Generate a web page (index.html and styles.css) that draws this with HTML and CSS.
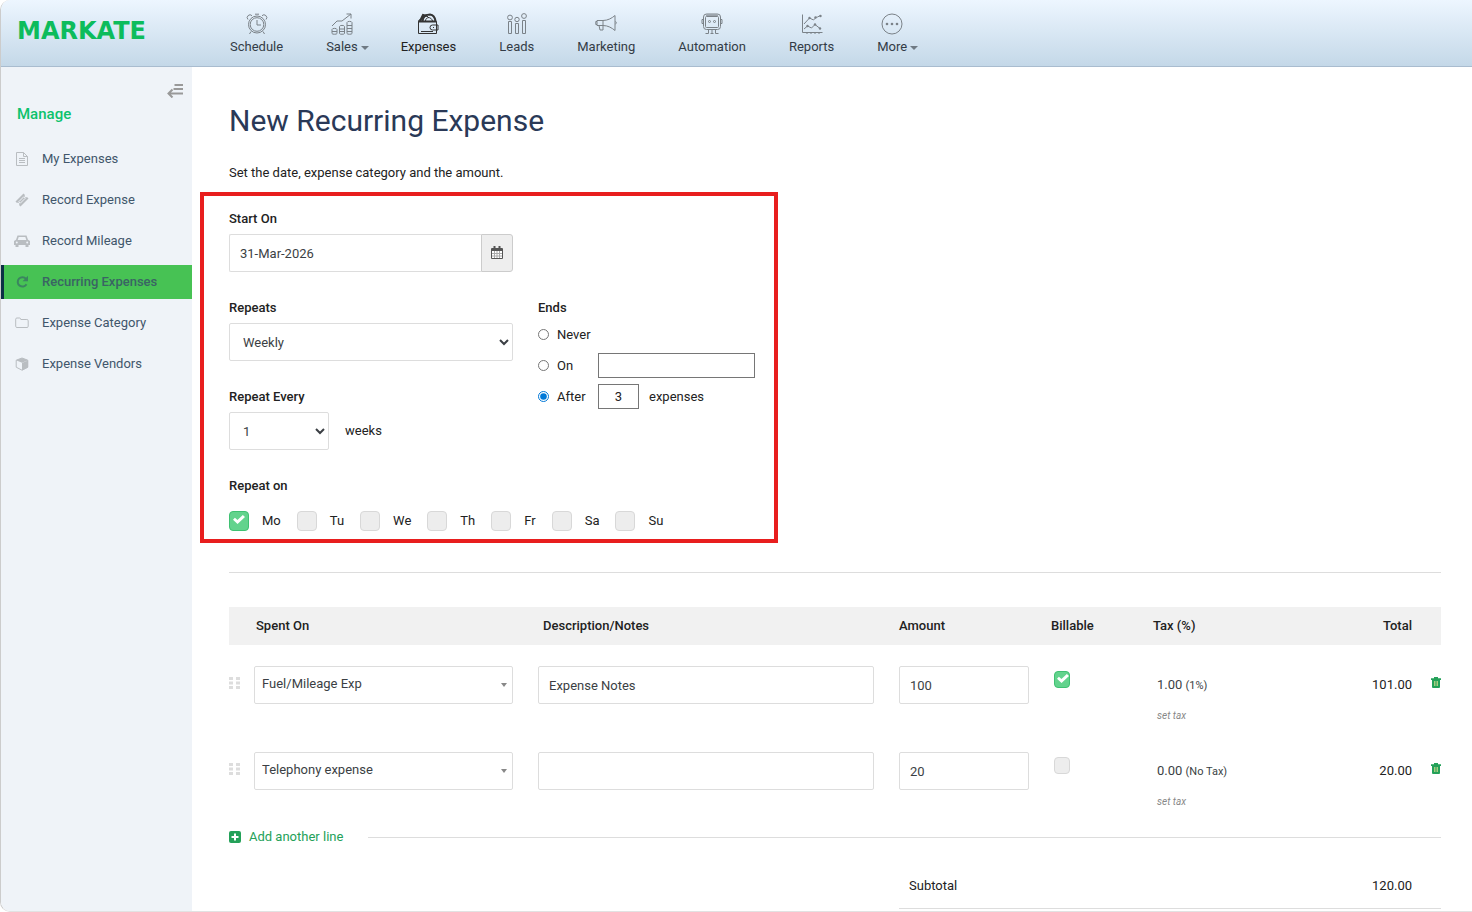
FILE: index.html
```
<!DOCTYPE html>
<html lang="en">
<head>
  <meta charset="UTF-8" />
  <meta name="viewport" content="width=device-width, initial-scale=1.0"/>
  <title>New Recurring Expense - Markate</title>
  <link rel="stylesheet" href="styles.css">
</head>
<body>
<div class="app">

  <header class="topbar">
    <a href="#" class="logo">MARKATE</a>
    <nav class="main-nav">
      <a href="#">
        <svg width="22" height="22" viewBox="0 0 22 22"><circle cx="11" cy="11.5" r="8.5"/><circle cx="11" cy="11.5" r="6.8"/><path d="M11 7v5h4M5 18.5l-1.5 2.500M17 18.500l1.500 2.500M9 1.200h4M2 6.500a2.600 2.600 0 1 1 4-3.800M20 6.500a2.600 2.600 0 1 0-4-3.800"/></svg>
        <span>Schedule</span>
      </a>
      <a href="#" class="has-menu">
        <svg width="22" height="22" viewBox="0 0 22 22"><path d="M1 13l5-5h5l9-7M15.500 1H20v4.500M1 16.500c0-1.500 5-1.500 5 0v4c0 1-5 1-5 0zM1 18.500h5M8.500 13.500c0-1.500 5-1.500 5 0v7c0 1-5 1-5 0zM8.500 16h5M8.500 18.500h5M16 9.500c0-1.500 5-1.500 5 0v11c0 1-5 1-5 0zM16 12.500h5M16 15.500h5M16 18.500h5"/></svg>
        <span>Sales</span>
      </a>
      <a href="#" class="active">
        <svg width="22" height="22" viewBox="0 0 22 22"><path class="bold" d="M1.500 8.500h18M3 8l3-6 4 1M5.500 8C6 3 10 1.500 13 1.500c3 .5 5 3 5.500 6.500"/><path d="M1.500 8.500h18v12h-18zM1.500 8.500c0-2 2-2 3-2M8.500 8c0-4 5.500-5 7 0M9 2l3 3M19.500 12h-4a2.500 2.500 0 0 0 0 5h4M19.500 12h1.500v5h-1.500M16 14.500h1M4 18.500h12"/></svg>
        <span>Expenses</span>
      </a>
      <a href="#">
        <svg width="22" height="22" viewBox="0 0 22 22"><circle cx="4" cy="4.500" r="2.400"/><circle cx="11" cy="6.500" r="2.200"/><circle cx="18" cy="3" r="2.400"/><path d="M2.500 8.500h3v12h-3zM9.500 10.500h3v10h-3zM16.500 7.500h3v13h-3z"/></svg>
        <span>Leads</span>
      </a>
      <a href="#">
        <svg width="22" height="22" viewBox="0 0 22 22"><path d="M2 7.500h6v5H2zM2 8.500H.8v3H2M8 7.500c5 0 9-2.500 12-5v15c-3-2.500-7-5-12-5M4 12.500l1 4.500h3v-4.500M20.500 8.500c1 0 1 2.500 0 2.500"/></svg>
        <span>Marketing</span>
      </a>
      <a href="#">
        <svg width="22" height="22" viewBox="0 0 22 22"><rect x="2.500" y="1" width="17" height="15.500" rx="3"/><rect x="4.500" y="3.500" width="13" height="11" rx="1"/><circle cx="8.500" cy="8.500" r="1"/><circle cx="13.500" cy="8.500" r="1"/><path d="M5 2.200h12M2.500 6.500H1v4h1.500M19.500 6.500H21v4h-1.500M7.500 16.500v4H4.500M14.500 16.500v4h3M11 16.500v4M9.500 20.500h3"/></svg>
        <span>Automation</span>
      </a>
      <a href="#">
        <svg width="22" height="22" viewBox="0 0 22 22"><path d="M1.500 1.500v18h20M6 19.500v1.500M10 19.500v1.500M14 19.500v1.500M18 19.500v1.500M3 11l5.500-6 4 2 3-3h1l3-1.500M3 16l3.500-3 4 2 3.500-3.500 5 4"/><g class="dots"><circle cx="8.500" cy="5" r="1.200"/><circle cx="14.500" cy="4.500" r="1.200"/><circle cx="19.500" cy="3" r="1.200"/><circle cx="6.500" cy="13" r="1.200"/><circle cx="14" cy="11.500" r="1.200"/><circle cx="19" cy="15.500" r="1.200"/></g></svg>
        <span>Reports</span>
      </a>
      <a href="#" class="has-menu">
        <svg width="22" height="22" viewBox="0 0 22 22"><circle cx="11" cy="11" r="10"/><g class="dots"><circle cx="6" cy="11" r="1.300"/><circle cx="11" cy="11" r="1.300"/><circle cx="16" cy="11" r="1.300"/></g></svg>
        <span>More</span>
      </a>
    </nav>
  </header>

  <div class="layout">
    <aside class="sidebar">
      <button type="button" class="collapse" aria-label="Collapse menu">
        <svg width="16" height="14" viewBox="0 0 16 14"><path d="M7.500 1H16M6.500 5H16M2 9.500h14M5.500 5.500l-4 4 4 4"/></svg>
      </button>
      <h2>Manage</h2>
      <ul>
        <li><a href="#">
          <svg width="14" height="14" viewBox="0 0 14 14"><path class="line" d="M1.500.5h7l4 4v9h-11zM8.500.5v4h4M4 6.500h6M4 8.500h6M4 10.500h6"/></svg>
          My Expenses</a></li>
        <li><a href="#">
          <svg width="14" height="14" viewBox="0 0 14 14"><path d="M8.500.5L10 2a1.400 1.400 0 0 0 2 2l1.500 1.500-8 8L4 12a1.400 1.400 0 0 0-2-2L.5 8.500z"/><path class="cut" d="M3.800 8.700L8.700 3.800l1.500 1.500-4.900 4.900z"/></svg>
          Record Expense</a></li>
        <li><a href="#">
          <svg width="16" height="14" viewBox="0 0 16 14"><path d="M3.500 1.500h9l1.500 4.300 2 1.200v4h-1.500V13h-3v-2h-7v2h-3v-2H0V7l2-1.200zM4.700 3l-1 3h8.600l-1-3zM2.800 7.500a1 1 0 1 0 0 2 1 1 0 0 0 0-2zM13.200 7.500a1 1 0 1 0 0 2 1 1 0 0 0 0-2z" fill-rule="evenodd"/></svg>
          Record Mileage</a></li>
        <li><a href="#" class="active">
          <svg width="14" height="14" viewBox="0 0 14 14"><path class="thick" d="M11 3.800A4.700 4.700 0 1 0 11.500 9.200"/><path d="M13 .8v5.400H7.600z"/></svg>
          Recurring Expenses</a></li>
        <li><a href="#">
          <svg width="14" height="14" viewBox="0 0 14 14"><path class="line" d="M.7 3.200q0-1.200 1.200-1.200h2.700q1 0 1.200 1.500h6q1.400 0 1.400 1.200v5.600q0 1.200-1.200 1.200H1.900q-1.200 0-1.200-1.200z"/></svg>
          Expense Category</a></li>
        <li><a href="#">
          <svg width="14" height="14" viewBox="0 0 14 14"><path class="line" d="M7 1l5.800 2.200v7L7 13.200l-5.800-3v-7z"/><path d="M7 6l6-2.500v7L7 13.500zM1 3.300L7 1l6 2.300-6 2.400z"/></svg>
          Expense Vendors</a></li>
      </ul>
    </aside>

    <main>
      <h1>New Recurring Expense</h1>
      <p class="intro">Set the date, expense category and the amount.</p>

      <form>
        <section class="schedule">
          <div class="field">
            <label for="start">Start On</label>
            <div class="date-group">
              <input type="text" id="start" value="31-Mar-2026">
              <button type="button" aria-label="Pick a date">
                <svg width="12" height="13" viewBox="0 0 12 13"><path class="page" d="M.5 2.500h11v10H.5z"/><path class="cells" d="M1 7.500h10M1 10h10M3.500 5v7M6 5v7M8.500 5v7"/><path class="rings" d="M.5 4h11M3.500 0v3M8.500 0v3"/></svg>
              </button>
            </div>
          </div>

          <div class="columns">
            <div>
              <div class="field">
                <label for="repeats">Repeats</label>
                <select id="repeats">
                  <option>Daily</option>
                  <option selected>Weekly</option>
                  <option>Monthly</option>
                </select>
              </div>
              <div class="field">
                <label for="every">Repeat Every</label>
                <div class="every">
                  <select id="every"><option>1</option><option>2</option><option>3</option></select>
                  <span>weeks</span>
                </div>
              </div>
            </div>

            <fieldset class="ends">
              <legend>Ends</legend>
              <div class="end-row">
                <input type="radio" name="ends" id="never">
                <label for="never">Never</label>
              </div>
              <div class="end-row">
                <input type="radio" name="ends" id="on">
                <label for="on">On</label>
                <input type="text" class="end-date" aria-label="End date">
              </div>
              <div class="end-row">
                <input type="radio" name="ends" id="after" checked>
                <label for="after">After</label>
                <input type="text" class="end-count" value="3" aria-label="Number of expenses">
                <span>expenses</span>
              </div>
            </fieldset>
          </div>

          <fieldset class="repeat-on">
            <legend>Repeat on</legend>
            <div class="days">
              <label><input type="checkbox" class="check" checked>Mo</label>
              <label><input type="checkbox" class="check">Tu</label>
              <label><input type="checkbox" class="check">We</label>
              <label><input type="checkbox" class="check">Th</label>
              <label><input type="checkbox" class="check">Fr</label>
              <label><input type="checkbox" class="check">Sa</label>
              <label><input type="checkbox" class="check">Su</label>
            </div>
          </fieldset>
        </section>

        <hr>

        <table class="lines">
          <thead>
            <tr>
              <th class="c-grip"></th>
              <th class="c-spent">Spent On</th>
              <th class="c-notes">Description/Notes</th>
              <th class="c-amount">Amount</th>
              <th class="c-bill">Billable</th>
              <th class="c-tax">Tax (%)</th>
              <th class="c-total">Total</th>
              <th class="c-del"></th>
            </tr>
          </thead>
          <tbody>
            <tr>
              <td><svg class="grip" width="11" height="12" viewBox="0 0 11 12"><path d="M0 0h4v3H0zM7 0h4v3H7zM0 4.500h4v3H0zM7 4.500h4v3H7zM0 9h4v3H0zM7 9h4v3H7z"/></svg></td>
              <td><div class="picker"><select aria-label="Spent on"><option>Fuel/Mileage Exp</option></select></div></td>
              <td><input type="text" class="notes" value="Expense Notes" aria-label="Notes"></td>
              <td><input type="text" class="amount" value="100" aria-label="Amount"></td>
              <td><input type="checkbox" class="check small" checked aria-label="Billable"></td>
              <td class="tax">1.00 <small>(1%)</small><a href="#">set tax</a></td>
              <td class="total">101.00</td>
              <td class="del"><button type="button" aria-label="Delete line"><svg width="10" height="11" viewBox="0 0 10 11"><path d="M0 1.200h3V0h4v1.200h3V3H0z"/><path d="M1 2h8v8q0 1-1 1H2q-1 0-1-1z"/><path class="slots" d="M3.500 4v5M5 4v5M6.500 4v5"/></svg></button></td>
            </tr>
            <tr>
              <td><svg class="grip" width="11" height="12" viewBox="0 0 11 12"><path d="M0 0h4v3H0zM7 0h4v3H7zM0 4.500h4v3H0zM7 4.500h4v3H7zM0 9h4v3H0zM7 9h4v3H7z"/></svg></td>
              <td><div class="picker"><select aria-label="Spent on"><option>Telephony expense</option></select></div></td>
              <td><input type="text" class="notes" aria-label="Notes"></td>
              <td><input type="text" class="amount" value="20" aria-label="Amount"></td>
              <td><input type="checkbox" class="check small" aria-label="Billable"></td>
              <td class="tax">0.00 <small>(No Tax)</small><a href="#">set tax</a></td>
              <td class="total">20.00</td>
              <td class="del"><button type="button" aria-label="Delete line"><svg width="10" height="11" viewBox="0 0 10 11"><path d="M0 1.200h3V0h4v1.200h3V3H0z"/><path d="M1 2h8v8q0 1-1 1H2q-1 0-1-1z"/><path class="slots" d="M3.500 4v5M5 4v5M6.500 4v5"/></svg></button></td>
            </tr>
          </tbody>
        </table>

        <div class="add-line">
          <a href="#">
            <svg width="12" height="12" viewBox="0 0 12 12"><rect width="12" height="12" rx="2"/><path d="M6 2.500v7M2.500 6h7"/></svg>
            Add another line
          </a>
        </div>

        <div class="subtotal">
          <span>Subtotal</span>
          <span>120.00</span>
        </div>
      </form>
    </main>
  </div>

</div>
</body>
</html>
```
FILE: styles.css
```
* {
  box-sizing: border-box;
}

body {
  margin: 0;
  background: #fff;
  color: #222;
  font-family: Roboto, "Open Sans", sans-serif;
  font-size: 13px;
  line-height: 20px;
}

input,
select,
button {
  font: inherit;
  color: inherit;
  margin: 0;
}

a {
  text-decoration: none;
}

.app {
  display: flex;
  flex-direction: column;
  min-height: 100vh;
  border-left: 1px solid #ccc;
  border-bottom: 1px solid #e2e2e2;
  border-radius: 10px 0 0 10px;
  overflow: hidden;
}

/* Top bar */
.topbar {
  display: flex;
  height: 67px;
  padding-left: 16px;
  background: linear-gradient(#edf6ff, #c4d8e8);
  border-bottom: 1px solid #a9bccf;
}

.logo {
  width: 213px;
  padding-top: 16px;
  color: #0dbc5c;
  font-family: "DejaVu Sans", sans-serif;
  font-size: 24px;
  font-weight: bold;
  line-height: 30px;
}

.main-nav {
  display: flex;
  gap: 43px;
}

.main-nav a {
  position: relative;
  display: flex;
  flex-direction: column;
  align-items: center;
  padding-top: 13px;
  color: #333c46;
}

.main-nav span {
  margin-top: 2px;
}

.main-nav svg {
  fill: none;
  stroke: #7b8288;
}

.main-nav .active,
.main-nav .active svg {
  color: #222;
  stroke: #333;
}

.main-nav .bold {
  stroke-width: 2;
}

.main-nav .dots {
  fill: #7b8288;
  stroke: none;
}

.has-menu::after {
  content: "";
  position: absolute;
  top: 46px;
  left: 100%;
  margin-left: 3px;
  border: 4px solid transparent;
  border-top-color: #6f7a84;
  border-bottom: 0;
}

/* Sidebar */
.layout {
  display: flex;
  flex: 1;
}

.sidebar {
  width: 191px;
  flex-shrink: 0;
  background: #eff3f8;
}

.collapse {
  display: block;
  margin: 17px 9px 0 auto;
  padding: 0;
  border: 0;
  background: none;
  height: 14px;
  line-height: 0;
}

.collapse svg {
  fill: none;
  stroke: #999;
  stroke-width: 2;
}

.sidebar h2 {
  margin: 6px 0 0 16px;
  color: #0cc26c;
  font-size: 15px;
  font-weight: 500;
  line-height: 20px;
}

.sidebar ul {
  margin: 18px 0 0;
  padding: 0;
  list-style: none;
}

.sidebar li {
  margin-bottom: 7px;
}

.sidebar li a {
  display: grid;
  grid-template-columns: 14px 1fr;
  gap: 13px;
  align-items: center;
  height: 34px;
  padding-left: 14px;
  color: #41566b;
}

.sidebar li svg {
  fill: #b9bdc1;
  justify-self: center;
}

.sidebar .line {
  fill: none;
  stroke: #b9bdc1;
}

.sidebar .cut {
  fill: none;
  stroke: #eff3f8;
}

.sidebar li .active {
  padding-left: 11px;
  border-left: 3px solid #0c2f45;
  background: #47c254;
  color: #3a6464;
  font-weight: 500;
}

.sidebar .active svg {
  fill: #3b8560;
}

.sidebar .thick {
  fill: none;
  stroke: #3b8560;
  stroke-width: 2;
}

/* Content */
main {
  flex: 1;
  padding: 34px 31px 0 37px;
}

h1 {
  margin: 0;
  color: #2a3957;
  font-size: 30px;
  font-weight: 400;
  line-height: 40px;
}

.intro {
  margin: 22px 0 9px;
}

.schedule {
  max-width: 578px;
  margin-left: -29px;
  padding: 13px 18px 8px 25px;
  border: 4px solid #e81e1e;
}

.field {
  width: 284px;
  margin-bottom: 26px;
}

.field > label,
legend {
  display: block;
  padding: 0;
  margin-bottom: 5px;
  font-weight: 500;
}

fieldset {
  margin: 0;
  padding: 0;
  border: 0;
}

.field input,
.field select,
.notes,
.amount,
.picker select {
  width: 100%;
  height: 38px;
  padding: 0 10px;
  border: 1px solid #ddd;
  border-radius: 2px;
  background: #fff;
  color: #3b3f44;
}

.field select {
  padding: 0 2px 0 9px;
}

.date-group {
  display: flex;
}

.date-group input {
  flex: 1;
  border-right: 0;
  border-radius: 2px 0 0 2px;
}

.date-group button {
  width: 32px;
  padding: 0 0 3px;
  border: 1px solid #ccc;
  border-radius: 0 3px 3px 0;
  background: #eee;
}

.date-group svg {
  fill: none;
  vertical-align: middle;
}

.date-group .page {
  fill: #fff;
  stroke: #555;
}

.date-group .cells {
  stroke: #aaa;
}

.date-group .rings {
  stroke: #555;
  stroke-width: 2;
}

.columns {
  display: flex;
  gap: 25px;
}

.every {
  display: flex;
  align-items: center;
  gap: 16px;
}

.every select {
  width: 100px;
}

.ends legend {
  margin-bottom: 4px;
}

.end-row {
  display: flex;
  align-items: center;
  height: 25px;
  margin-bottom: 6px;
}

.end-row input[type="radio"] {
  width: 11px;
  height: 11px;
  accent-color: #0078d7;
}

.end-row label {
  width: 41px;
  margin-left: 8px;
}

.end-row input[type="text"] {
  height: 25px;
  border: 1px solid #767676;
}

.end-date {
  width: 157px;
}

.end-count {
  width: 41px;
  margin-right: 10px;
  text-align: center;
}

.repeat-on legend {
  margin-bottom: 15px;
}

.days {
  display: flex;
  gap: 16px;
}

.days label {
  display: flex;
  align-items: center;
  gap: 13px;
}

.check {
  position: relative;
  width: 20px;
  height: 20px;
  appearance: none;
  border: 1px solid #d8d8d8;
  border-radius: 4px;
  background: #ededed;
}

.check:checked {
  border-color: #3fc172;
  background: #63d38d;
}

.check:checked::after {
  content: "";
  position: absolute;
  top: 3px;
  left: 3px;
  width: 12px;
  height: 9px;
  background: #fff;
  clip-path: polygon(0 52%, 16% 30%, 37% 55%, 82% 0, 100% 22%, 38% 100%);
}

.small {
  width: 16px;
  height: 17px;
}

.small:checked::after {
  top: 2px;
  left: 2px;
}

hr {
  margin: 29px 0 34px;
  border: 0;
  border-top: 1px solid #ddd;
}

/* Expense lines */
.lines {
  width: 100%;
  table-layout: fixed;
  border-collapse: collapse;
}

.lines th {
  height: 38px;
  padding: 0;
  background: #f1f1f1;
  font-weight: 500;
  text-align: left;
}

.c-grip {
  width: 25px;
}

.lines .c-spent {
  width: 284px;
  padding-left: 2px;
}

.lines .c-notes {
  padding-left: 5px;
}

.c-amount {
  width: 152px;
}

.c-bill {
  width: 102px;
}

.c-tax {
  width: 128px;
}

.lines .c-total {
  width: 131px;
  text-align: right;
}

.c-del {
  width: 29px;
}

.lines td {
  height: 86px;
  padding: 21px 0 0;
  vertical-align: top;
}

.grip {
  display: block;
  margin-top: 11px;
  fill: #ddd;
}

.picker {
  position: relative;
  margin-right: 25px;
}

.picker select {
  padding: 0 7px 3px;
  appearance: none;
}

.picker::after {
  content: "";
  position: absolute;
  top: 17px;
  right: 6px;
  border: 3px solid transparent;
  border-top: 4px solid #888;
  border-bottom: 0;
}

.lines td:nth-child(3) {
  padding-right: 25px;
}

.lines .amount {
  width: 130px;
}

.lines .small {
  display: block;
  margin: 5px 0 0 3px;
}

.lines .tax {
  padding: 30px 0 0 4px;
  color: #3b3f44;
}

.tax small {
  font-size: 11px;
}

.tax a {
  display: block;
  margin-top: 10px;
  color: #888;
  font-size: 10px;
  font-style: italic;
}

.lines .total {
  padding-top: 30px;
  text-align: right;
}

.del {
  text-align: right;
}

.del button {
  display: block;
  margin: 11px 0 0 auto;
  padding: 0;
  border: 0;
  background: none;
  line-height: 0;
}

.del svg {
  fill: #24a159;
}

.del .slots {
  stroke: #c9d98a;
  stroke-width: .8;
}

.add-line {
  display: flex;
  align-items: center;
  gap: 25px;
  margin-top: 10px;
}

.add-line::after {
  content: "";
  flex: 1;
  border-top: 1px solid #ddd;
}

.add-line a {
  display: flex;
  align-items: center;
  gap: 8px;
  color: #24a159;
}

.add-line rect {
  fill: #24a159;
}

.add-line path {
  stroke: #fff;
  stroke-width: 2;
}

.subtotal {
  display: flex;
  justify-content: space-between;
  width: 542px;
  margin: 29px 0 0 auto;
  padding: 0 29px 12px 10px;
  border-bottom: 1px solid #ddd;
}
```
